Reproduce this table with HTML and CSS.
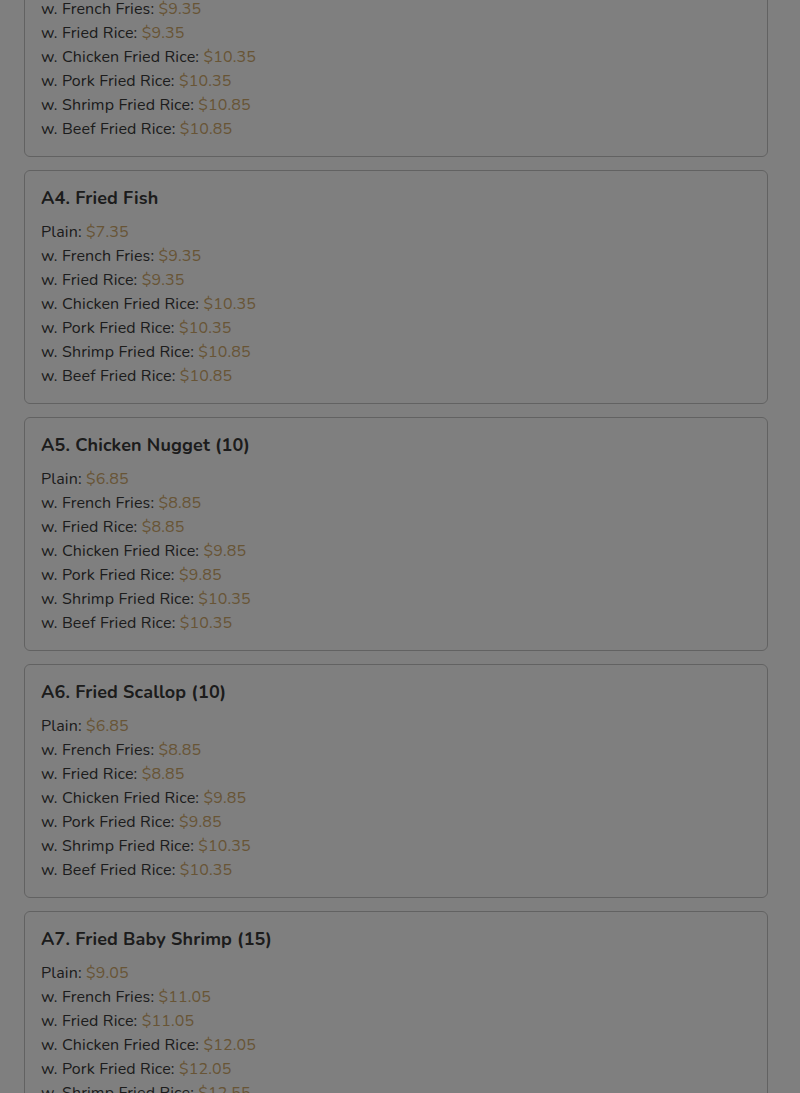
FILE: index.html
```html
<!DOCTYPE html>
<html>
<head>
<meta charset="utf-8">
<link rel="stylesheet" href="styles.css">
</head>
<body>
<div class="menu">
  <div class="card">
    <h3 class="title">A3. Fried Chicken Wing (4)</h3>
    <div class="item">Plain: <span class="price">$7.35</span></div>
    <div class="item">w. French Fries: <span class="price">$9.35</span></div>
    <div class="item">w. Fried Rice: <span class="price">$9.35</span></div>
    <div class="item">w. Chicken Fried Rice: <span class="price">$10.35</span></div>
    <div class="item">w. Pork Fried Rice: <span class="price">$10.35</span></div>
    <div class="item">w. Shrimp Fried Rice: <span class="price">$10.85</span></div>
    <div class="item">w. Beef Fried Rice: <span class="price">$10.85</span></div>
  </div>
  <div class="card">
    <h3 class="title">A4. Fried Fish</h3>
    <div class="item">Plain: <span class="price">$7.35</span></div>
    <div class="item">w. French Fries: <span class="price">$9.35</span></div>
    <div class="item">w. Fried Rice: <span class="price">$9.35</span></div>
    <div class="item">w. Chicken Fried Rice: <span class="price">$10.35</span></div>
    <div class="item">w. Pork Fried Rice: <span class="price">$10.35</span></div>
    <div class="item">w. Shrimp Fried Rice: <span class="price">$10.85</span></div>
    <div class="item">w. Beef Fried Rice: <span class="price">$10.85</span></div>
  </div>
  <div class="card">
    <h3 class="title">A5. Chicken Nugget (10)</h3>
    <div class="item">Plain: <span class="price">$6.85</span></div>
    <div class="item">w. French Fries: <span class="price">$8.85</span></div>
    <div class="item">w. Fried Rice: <span class="price">$8.85</span></div>
    <div class="item">w. Chicken Fried Rice: <span class="price">$9.85</span></div>
    <div class="item">w. Pork Fried Rice: <span class="price">$9.85</span></div>
    <div class="item">w. Shrimp Fried Rice: <span class="price">$10.35</span></div>
    <div class="item">w. Beef Fried Rice: <span class="price">$10.35</span></div>
  </div>
  <div class="card">
    <h3 class="title">A6. Fried Scallop (10)</h3>
    <div class="item">Plain: <span class="price">$6.85</span></div>
    <div class="item">w. French Fries: <span class="price">$8.85</span></div>
    <div class="item">w. Fried Rice: <span class="price">$8.85</span></div>
    <div class="item">w. Chicken Fried Rice: <span class="price">$9.85</span></div>
    <div class="item">w. Pork Fried Rice: <span class="price">$9.85</span></div>
    <div class="item">w. Shrimp Fried Rice: <span class="price">$10.35</span></div>
    <div class="item">w. Beef Fried Rice: <span class="price">$10.35</span></div>
  </div>
  <div class="card">
    <h3 class="title">A7. Fried Baby Shrimp (15)</h3>
    <div class="item">Plain: <span class="price">$9.05</span></div>
    <div class="item">w. French Fries: <span class="price">$11.05</span></div>
    <div class="item">w. Fried Rice: <span class="price">$11.05</span></div>
    <div class="item">w. Chicken Fried Rice: <span class="price">$12.05</span></div>
    <div class="item">w. Pork Fried Rice: <span class="price">$12.05</span></div>
    <div class="item">w. Shrimp Fried Rice: <span class="price">$12.55</span></div>
    <div class="item">w. Beef Fried Rice: <span class="price">$12.55</span></div>
  </div>
</div>
<div class="overlay"></div>
</body>
</html>
```

FILE: styles.css
```css
html, body {
  margin: 0;
  padding: 0;
  background: #ffffff;
  overflow: hidden;
  height: 1093px;
}
body {
  font-family: "Nunito", Lato, "Open Sans", sans-serif;
  color: #383838;
}
.menu {
  display: flex;
  flex-direction: column;
  gap: 13px;
  margin: -77px 32px 0 24px;
}
.card {
  border: 1px solid #c4c4c4;
  border-radius: 6px;
  padding: 16px 16px 15px;
  background: #ffffff;
}
.title {
  margin: 0 0 11px;
  font-size: 18px;
  line-height: 22px;
  font-weight: 700;
  letter-spacing: 0.15px;
  color: #383838;
}
.item {
  font-size: 16px;
  line-height: 24px;
  letter-spacing: 0.15px;
}
.price {
  color: #d0aa6c;
}
.overlay {
  position: fixed;
  inset: 0;
  background: rgba(0, 0, 0, 0.5);
}
```
